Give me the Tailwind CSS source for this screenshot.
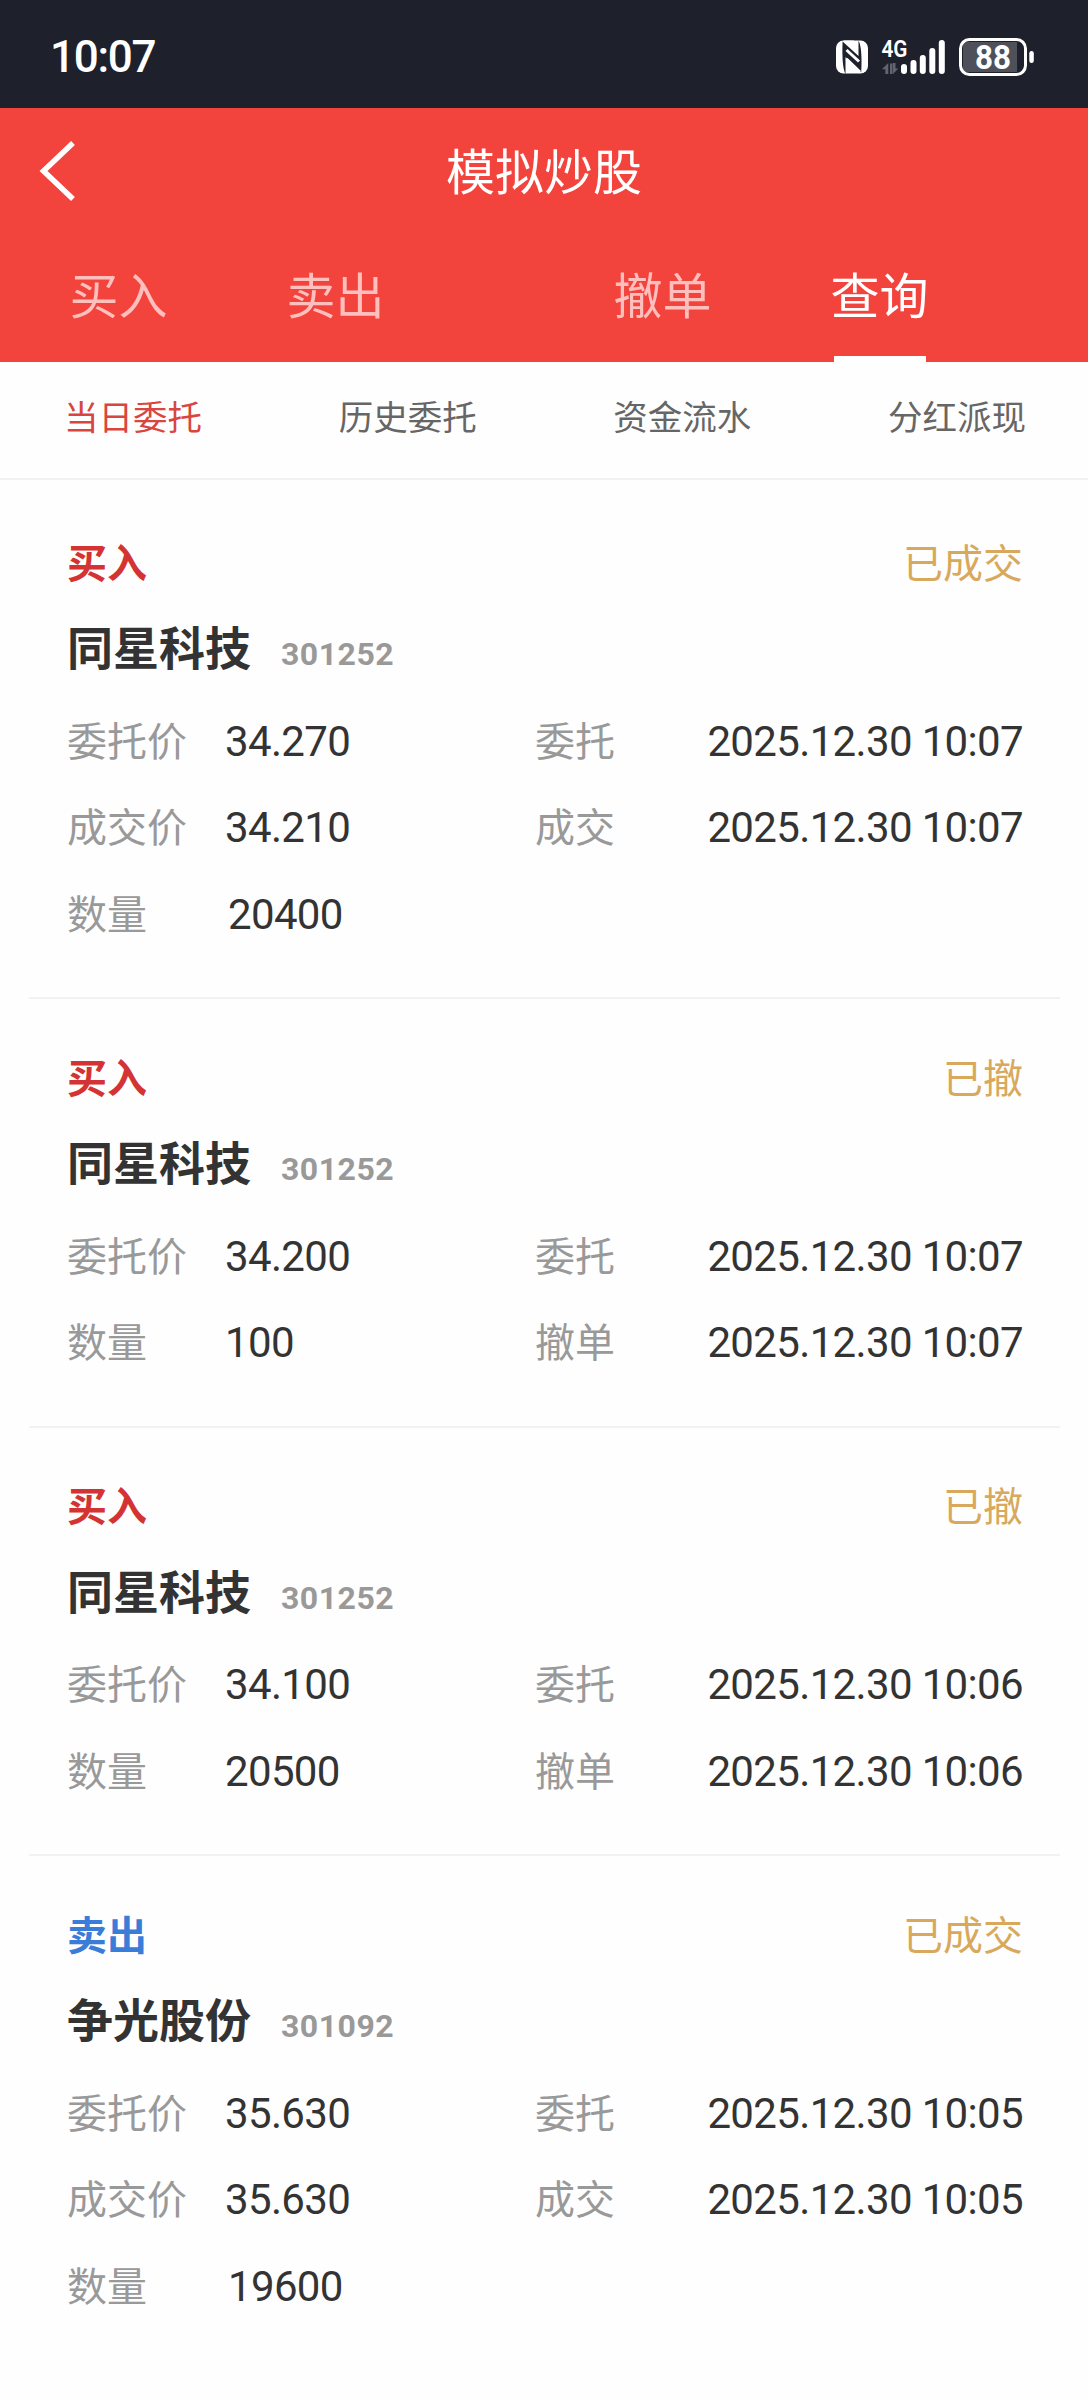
<!DOCTYPE html>
<html lang="zh-CN">
<head>
<meta charset="utf-8">
<title>模拟炒股</title>
<script src="https://cdn.jsdelivr.net/npm/@tailwindcss/browser@4"></script>
</head>
<body class="w-[1088px] h-[2400px] overflow-hidden bg-[#fefefe] font-['Noto_Sans_CJK_SC',sans-serif] text-[#333333]">
<div class="flex h-[108px] items-center justify-between bg-[#1e212b] pl-[50px] pr-[54px] pt-[5px] text-white">
  <span class="font-['Roboto',sans-serif] text-[44px] font-medium leading-none tracking-[-1.3px]">10:07</span>
  <svg class="h-[40px] w-[200px]" viewBox="834 36 200 40" fill="none">
    <rect x="836" y="39.500" width="32" height="33" rx="7.500" fill="#fff"/>
    <path d="M842.600 40.500L858.500 55V39.500Q862.500 47 861.200 71.500L845.500 56V73Q841.600 66 842.600 40.500Z" fill="#1e212b"/>
    <path d="M843.500 39.500L857.600 52.500V47Q857 42 853.500 39.500Z" fill="#fff"/>
    <path d="M846.500 49L859 60.500M846.500 58L860 71" stroke="#fff" stroke-width="3"/>
    <text x="881.500" y="56" font-family="Roboto, sans-serif" font-size="23" font-weight="600" fill="#fff" textLength="26" lengthAdjust="spacingAndGlyphs">4G</text>
    <path d="M888.300 62V73H885.300V68.300H881.800ZM890 62.500H892.500V73H890ZM893 62H895.500V67.500H898.300L893 73Z" fill="#62656d"/>
    <path d="M904 66V70M913.500 62V70M922.800 57V70M932.300 50V70M941.800 42V70" stroke="#fff" stroke-width="6" stroke-linecap="round"/>
    <path d="M968 41H1017V71H968Q963 71 963 66V46Q963 41 968 41Z" fill="#4e5159"/>
    <rect x="960.500" y="38.500" width="65" height="35" rx="9" stroke="#fff" stroke-width="3"/>
    <rect x="1029.300" y="50" width="4.500" height="12" rx="2.200" fill="#fff"/>
    <text x="975" y="67.500" font-family="Roboto, sans-serif" font-size="33" font-weight="700" fill="#fff" textLength="36" lengthAdjust="spacingAndGlyphs">88</text>
  </svg>
</div>
<header class="h-[254px] bg-[#f2433d] text-white">
  <div class="grid h-[126px] grid-cols-3 items-center">
    <svg class="ml-[38px] h-[62px] w-[40px]" viewBox="0 0 40 62" fill="none"><path d="M35 3L5.500 31L35 59" stroke="#fff" stroke-width="5.500"/></svg>
    <h1 class="pb-[6px] text-center text-[49px] leading-none">模拟炒股</h1>
  </div>
  <nav class="flex h-[128px] pl-[10px] text-[49px] leading-none text-[#ffbfbd]">
    <a class="flex w-[217px] justify-center pt-[34px]">买入</a>
    <a class="mr-[110px] flex w-[217px] justify-center pt-[34px]">卖出</a>
    <a class="flex w-[217px] justify-center pt-[34px]">撤单</a>
    <a class="flex w-[217px] flex-col items-center justify-between pt-[34px] text-white">查询<span class="h-[6px] w-[92px] bg-white"></span></a>
  </nav>
</header>
<nav class="flex h-[118px] items-start justify-between border-b-2 border-[#f2f2f2] pl-[64px] pr-[62px] pt-[36px] text-[34.5px] leading-none text-[#666666]">
  <a class="text-[#d9453f]">当日委托</a><a>历史委托</a><a>资金流水</a><a>分红派现</a>
</nav>
<main id="orders" class="ml-[29px] mr-[28px] pt-[4px]"></main>
<script>
const orders = [
  { side: '买入', state: '已成交', name: '同星科技', code: '301252', rows: [['委托价', '34.270', '委托', '2025.12.30 10:07'], ['成交价', '34.210', '成交', '2025.12.30 10:07'], ['数量', '20400']] },
  { side: '买入', state: '已撤', name: '同星科技', code: '301252', rows: [['委托价', '34.200', '委托', '2025.12.30 10:07'], ['数量', '100', '撤单', '2025.12.30 10:07']] },
  { side: '买入', state: '已撤', name: '同星科技', code: '301252', rows: [['委托价', '34.100', '委托', '2025.12.30 10:06'], ['数量', '20500', '撤单', '2025.12.30 10:06']] },
  { side: '卖出', state: '已成交', name: '争光股份', code: '301092', rows: [['委托价', '35.630', '委托', '2025.12.30 10:05'], ['成交价', '35.630', '成交', '2025.12.30 10:05'], ['数量', '19600']] }
];
const num = "pt-[1px] font-['Roboto',sans-serif] text-[42px] tracking-[-0.65px] text-[#333333]";
const row = ([label, value, event, time]) => `
  <div class="flex h-[86.5px] items-center text-[40px] leading-none text-[#999999]">
    <span class="w-[158px] pb-[5px]">${label}</span>
    <span class="${num} w-[310px] ${event ? '' : 'pl-[3px]'}">${value}</span>
    ${event ? `<span class="pb-[5px]">${event}</span><span class="${num} ml-auto">${time}</span>` : ''}
  </div>`;
document.getElementById('orders').innerHTML = orders.map((o, i) => `
  <article class="pl-[38px] pr-[37px] pt-[40px] pb-[39.5px] ${i < orders.length - 1 ? 'border-b-2 border-[#f2f2f2]' : ''}">
    <div class="flex h-[80px] items-center justify-between pb-[7px] text-[40px] leading-none">
      <b class="${o.side === '买入' ? 'text-[#d43333]' : 'text-[#3a7dd8]'}">${o.side}</b>
      <span class="text-[#d8a95c]">${o.state}</span>
    </div>
    <div class="mb-[4px] flex h-[90px] items-center">
      <b class="w-[214px] pb-[8px] text-[46px] leading-none">${o.name}</b>
      <b class="mt-[10px] font-['Roboto',sans-serif] text-[32px] leading-none tracking-[0.5px] text-[#999999]">${o.code}</b>
    </div>
    ${o.rows.map(row).join('')}
  </article>`).join('');
</script>
</body>
</html>
